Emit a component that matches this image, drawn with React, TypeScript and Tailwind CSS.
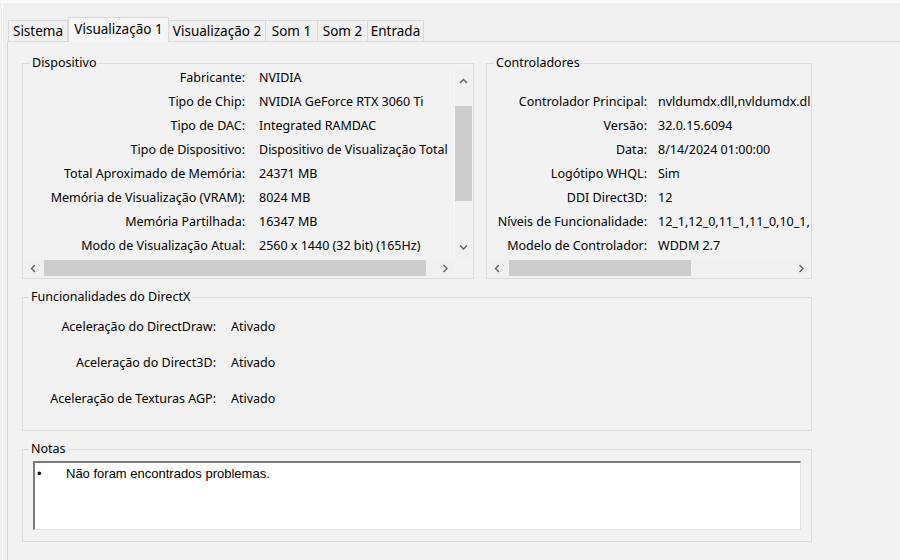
import type { ReactNode } from 'react'

const tabs = [
  { label: 'Sistema', width: 'w-[60px] border-l' },
  { label: 'Visualização 1', width: 'w-[101px]', active: true },
  { label: 'Visualização 2', width: 'w-[97px]' },
  { label: 'Som 1', width: 'w-[52px]' },
  { label: 'Som 2', width: 'w-[50px]' },
  { label: 'Entrada', width: 'w-[56px]' },
]

const deviceRows = [
  ['Fabricante:', 'NVIDIA'],
  ['Tipo de Chip:', 'NVIDIA GeForce RTX 3060 Ti'],
  ['Tipo de DAC:', 'Integrated RAMDAC'],
  ['Tipo de Dispositivo:', 'Dispositivo de Visualização Total'],
  ['Total Aproximado de Memória:', '24371 MB'],
  ['Memória de Visualização (VRAM):', '8024 MB'],
  ['Memória Partilhada:', '16347 MB'],
  ['Modo de Visualização Atual:', '2560 x 1440 (32 bit) (165Hz)'],
]

const driverRows = [
  ['', ''],
  ['Controlador Principal:', 'nvldumdx.dll,nvldumdx.dll,nvldumdx.dll,nvldumdx.dll'],
  ['Versão:', '32.0.15.6094'],
  ['Data:', '8/14/2024 01:00:00'],
  ['Logótipo WHQL:', 'Sim'],
  ['DDI Direct3D:', '12'],
  ['Níveis de Funcionalidade:', '12_1,12_0,11_1,11_0,10_1,10_0,9_3,9_2,9_1'],
  ['Modelo de Controlador:', 'WDDM 2.7'],
]

const featureRows = [
  ['Aceleração do DirectDraw:', 'Ativado'],
  ['Aceleração do Direct3D:', 'Ativado'],
  ['Aceleração de Texturas AGP:', 'Ativado'],
]

function Chevron({ dir }: { dir: 'up' | 'down' | 'left' | 'right' }) {
  const d = {
    up: 'M1 5 L4.5 1.5 L8 5',
    down: 'M1 1.5 L4.5 5 L8 1.5',
    left: 'M5 1 L1.5 4.5 L5 8',
    right: 'M1.5 1 L5 4.5 L1.5 8',
  }[dir]
  const vertical = dir === 'up' || dir === 'down'
  return (
    <svg
      width={vertical ? 9 : 7}
      height={vertical ? 7 : 9}
      viewBox={vertical ? '0 0 9 7' : '0 0 7 9'}
      fill="none"
      stroke="#606060"
      strokeWidth="1.4"
    >
      <path d={d} />
    </svg>
  )
}

function GroupBox({ title, className, children }: { title: string; className: string; children: ReactNode }) {
  return (
    <fieldset className={`min-w-0 shrink-0 border border-[#dcdcdc] ${className}`}>
      <legend className="ml-[6px] px-[2px] leading-[16px] text-black">{title}</legend>
      {children}
    </fieldset>
  )
}

function HScroll({ thumb }: { thumb: string }) {
  return (
    <div className="flex h-[18px] items-center bg-[#f0f0f0]">
      <div className="flex w-[18px] shrink-0 justify-center">
        <Chevron dir="left" />
      </div>
      <div className="flex h-full flex-1 items-stretch py-[1px]">
        <div className={`bg-[#cdcdcd] ${thumb}`} />
      </div>
      <div className="flex w-[18px] shrink-0 justify-center">
        <Chevron dir="right" />
      </div>
    </div>
  )
}

export default function App() {
  return (
    <div
      className="h-[560px] w-[900px] overflow-hidden bg-[#f0f0f0] text-[12.5px] text-black"
      style={{ fontFamily: '"Noto Sans", "Segoe UI", sans-serif' }}
    >
      <div className="h-[3px] bg-[#fafafa]" />
      <div className="ml-[2px] border-l border-white">
        <div className="flex h-[38px] items-end pl-[5px] pt-[14px]">
          {tabs.map((t) => (
            <div
              key={t.label}
              className={`flex shrink-0 items-center justify-center border-t border-r border-[#d9d9d9] text-[13.5px] leading-[16px] whitespace-nowrap ${t.width} ${
                t.active ? 'relative -mb-px h-[25px] border-l bg-[#f5f5f5] pb-[3px]' : 'h-[21px] bg-[#f0f0f0]'
              }`}
            >
              {t.label}
            </div>
          ))}
        </div>
        <div className="ml-[4px] h-[520px] border-t border-l border-[#d9d9d9] bg-[#f2f2f2] pl-[14px] pt-[13px]">
          <div className="flex gap-[12px]">
            <GroupBox title="Dispositivo" className="w-[452px] px-[1px] pb-[1px]">
              <div className="-mt-[1px] flex h-[189px]">
                <div className="min-w-0 flex-1 overflow-hidden">
                  {deviceRows.map(([label, value]) => (
                    <div key={label} className="flex h-[24px] gap-[14px] leading-[16px] whitespace-nowrap">
                      <span className="w-[221px] shrink-0 text-right">{label}</span>
                      <span>{value}</span>
                    </div>
                  ))}
                </div>
                <div className="flex w-[18px] shrink-0 flex-col items-center border-l border-[#f8f8f8] bg-[#f0f0f0] pt-[2px]">
                  <div className="flex h-[18px] items-center">
                    <Chevron dir="up" />
                  </div>
                  <div className="mt-[16px] h-[95px] w-[17px] bg-[#cdcdcd]" />
                  <div className="flex-1" />
                  <div className="flex h-[18px] items-center pb-[6px]">
                    <Chevron dir="down" />
                  </div>
                </div>
              </div>
              <div className="flex">
                <div className="flex-1">
                  <HScroll thumb="ml-[2px] w-[382px]" />
                </div>
                <div className="w-[18px]" />
              </div>
            </GroupBox>

            <GroupBox title="Controladores" className="w-[326px] px-[1px] pb-[1px]">
              <div className="-mt-[1px] h-[189px] overflow-hidden">
                {driverRows.map(([label, value], i) => (
                  <div key={i} className="flex h-[24px] gap-[11px] leading-[16px] whitespace-nowrap">
                    <span className="w-[159px] shrink-0 text-right">{label}</span>
                    <span>{value}</span>
                  </div>
                ))}
              </div>
              <HScroll thumb="ml-[3px] w-[182px]" />
            </GroupBox>
          </div>

          <GroupBox title="Funcionalidades do DirectX" className="mt-[10px] w-[790px] pt-[14px] pb-[23px]">
            <div className="flex flex-col gap-[20px]">
              {featureRows.map(([label, value]) => (
                <div key={label} className="flex gap-[15px] leading-[16px]">
                  <span className="w-[193px] shrink-0 text-right">{label}</span>
                  <span>{value}</span>
                </div>
              ))}
            </div>
          </GroupBox>

          <GroupBox title="Notas" className="mt-[10px] w-[790px]">
            <div className="px-[10px] pt-[4px] pb-[11px]">
              <div className="h-[69px] border-t-2 border-l-2 border-r border-b border-t-[#7a7a7a] border-l-[#7a7a7a] border-r-[#e3e3e3] border-b-[#e3e3e3] bg-white pt-[3px]">
                <div
                  className="flex text-[13px] leading-[16px]"
                  style={{ fontFamily: '"Liberation Sans", Arial, sans-serif' }}
                >
                  <span className="w-[31px] pl-[2px]">•</span>
                  <span>Não foram encontrados problemas.</span>
                </div>
              </div>
            </div>
          </GroupBox>
        </div>
      </div>
    </div>
  )
}
